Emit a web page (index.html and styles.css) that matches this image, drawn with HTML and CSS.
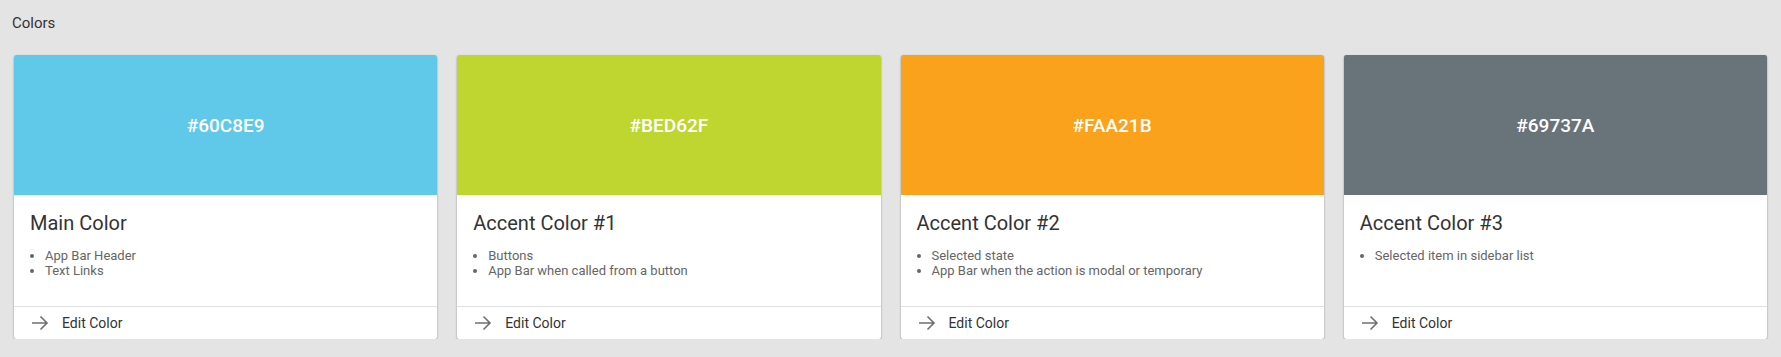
FILE: index.html
```html
<!DOCTYPE html>
<html lang="en">

<head>
  <meta charset="UTF-8">
  <meta name="viewport" content="width=device-width, initial-scale=1.0">
  <title>Colors</title>
  <link rel="stylesheet" href="styles.css">
</head>

<body>
  <h2 class="page-title">Colors</h2>

  <div class="color-grid">
    <div class="color-card">
      <div class="swatch swatch-main">#60C8E9</div>
      <div class="card-body">
        <h3 class="card-title">Main Color</h3>
        <ul class="usage-list">
          <li>App Bar Header</li>
          <li>Text Links</li>
        </ul>
      </div>
      <div class="card-footer">
        <svg class="arrow-icon" viewBox="0 0 20 20" width="20" height="20"><path d="M2 10h15M10.5 3.5l6.5 6.5-6.5 6.5" fill="none" stroke="#707070" stroke-width="1.6"/></svg>
        <span>Edit Color</span>
      </div>
    </div>

    <div class="color-card">
      <div class="swatch swatch-accent1">#BED62F</div>
      <div class="card-body">
        <h3 class="card-title">Accent Color #1</h3>
        <ul class="usage-list">
          <li>Buttons</li>
          <li>App Bar when called from a button</li>
        </ul>
      </div>
      <div class="card-footer">
        <svg class="arrow-icon" viewBox="0 0 20 20" width="20" height="20"><path d="M2 10h15M10.5 3.5l6.5 6.5-6.5 6.5" fill="none" stroke="#707070" stroke-width="1.6"/></svg>
        <span>Edit Color</span>
      </div>
    </div>

    <div class="color-card">
      <div class="swatch swatch-accent2">#FAA21B</div>
      <div class="card-body">
        <h3 class="card-title">Accent Color #2</h3>
        <ul class="usage-list">
          <li>Selected state</li>
          <li>App Bar when the action is modal or temporary</li>
        </ul>
      </div>
      <div class="card-footer">
        <svg class="arrow-icon" viewBox="0 0 20 20" width="20" height="20"><path d="M2 10h15M10.5 3.5l6.5 6.5-6.5 6.5" fill="none" stroke="#707070" stroke-width="1.6"/></svg>
        <span>Edit Color</span>
      </div>
    </div>

    <div class="color-card">
      <div class="swatch swatch-accent3">#69737A</div>
      <div class="card-body">
        <h3 class="card-title">Accent Color #3</h3>
        <ul class="usage-list">
          <li>Selected item in sidebar list</li>
        </ul>
      </div>
      <div class="card-footer">
        <svg class="arrow-icon" viewBox="0 0 20 20" width="20" height="20"><path d="M2 10h15M10.5 3.5l6.5 6.5-6.5 6.5" fill="none" stroke="#707070" stroke-width="1.6"/></svg>
        <span>Edit Color</span>
      </div>
    </div>
  </div>
</body>

</html>
```

FILE: styles.css
```css
body {
  margin: 0;
  font-family: Roboto, 'Liberation Sans', sans-serif;
  background-color: #e4e4e4;
  color: #333;
}

.page-title {
  margin: 0;
  padding: 14px 12px 0;
  height: 42px;
  box-sizing: border-box;
  font-size: 15px;
  font-weight: 400;
  color: #333;
}

.color-grid {
  display: grid;
  grid-template-columns: repeat(4, 1fr);
  gap: 20px;
  padding: 13px 14px 0;
}

.color-card {
  background-color: #fff;
  border-radius: 2px;
  box-shadow: 0 1px 2px rgba(0, 0, 0, 0.4);
  display: flex;
  flex-direction: column;
  overflow: hidden;
}

.swatch {
  height: 140px;
  display: flex;
  align-items: center;
  justify-content: center;
  color: #fff;
  font-size: 19px;
  font-weight: 500;
}

.swatch-main {
  background-color: #60c8e9;
}

.swatch-accent1 {
  background-color: #bed62f;
}

.swatch-accent2 {
  background-color: #faa21b;
}

.swatch-accent3 {
  background-color: #69737a;
}

.card-body {
  height: 111px;
  padding: 16px 16px 0;
  box-sizing: border-box;
}

.card-title {
  margin: 0;
  font-size: 20px;
  font-weight: 400;
  line-height: 24px;
  color: #333;
}

.usage-list {
  margin: 13px 0 0;
  padding-left: 15px;
  font-size: 13px;
  line-height: 15px;
  color: #666;
}

.card-footer {
  border-top: 1px solid #e0e0e0;
  height: 32px;
  display: flex;
  align-items: center;
  gap: 12px;
  padding-left: 16px;
  font-size: 14px;
  color: #333;
}
```
